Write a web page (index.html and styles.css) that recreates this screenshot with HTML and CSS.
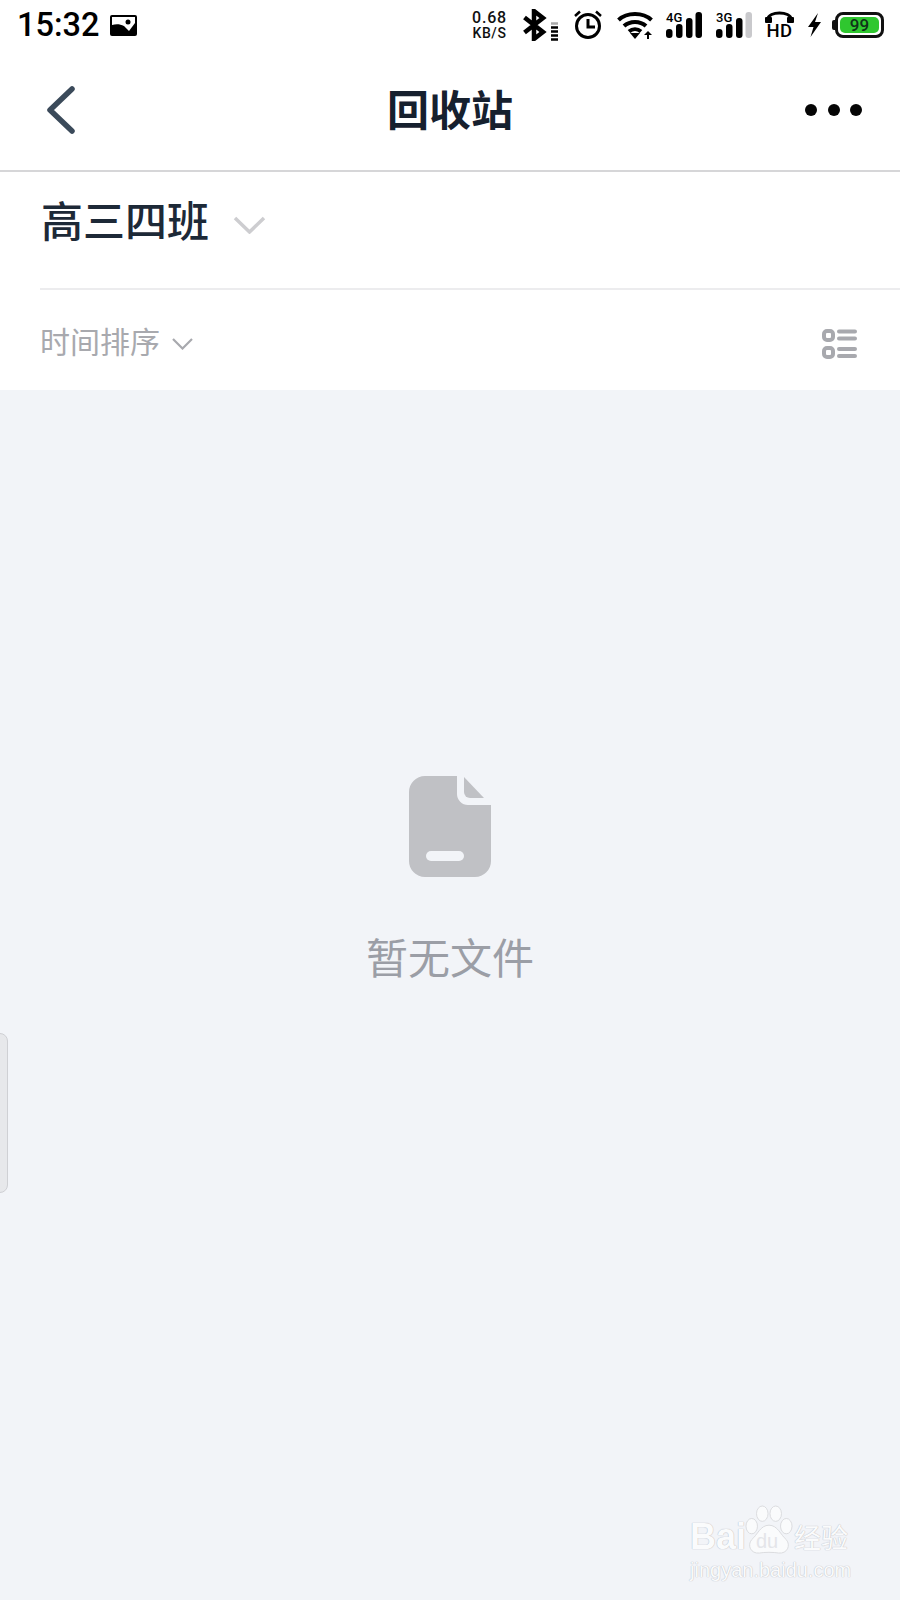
FILE: index.html
```html
<!DOCTYPE html>
<html lang="zh-CN">
<head>
    <meta charset="UTF-8">
    <meta name="viewport" content="width=device-width, initial-scale=1.0">
    <title>回收站</title>
    <link rel="stylesheet" href="styles.css">
</head>
<body>
    <div class="page">
        <div class="status-bar">
            <div class="status-left">
                <span class="clock">15:32</span>
                <svg class="status-pic" width="27" height="21" viewBox="0 0 27 21">
                    <rect width="27" height="21" rx="2" fill="#000"/>
                    <path d="M2 2H25V8L19 16L14 11C10 9 6 9 2 10Z" fill="#fff"/>
                    <circle cx="18" cy="7" r="2.5" fill="#000"/>
                </svg>
            </div>
            <div class="status-right">
                <div class="speed"><span class="speed-num">0.68</span><span class="speed-unit">KB/S</span></div>
                <svg width="36" height="32" viewBox="0 0 36 32">
                    <path d="M1.5 8.5L20 23L11 30V2L20 9L1.5 23.5" fill="none" stroke="#000" stroke-width="4.5"/>
                    <path d="M28 14.5H35" stroke="#aaa" stroke-width="2.5"/>
                    <path d="M28 18.5H35M28 22.5H35M28 26.5H35M28 30.5H35" stroke="#000" stroke-width="2.5"/>
                </svg>
                <svg class="status-wide" width="30" height="30" viewBox="0 0 30 30">
                    <circle cx="15" cy="16" r="11.5" fill="none" stroke="#000" stroke-width="3"/>
                    <path d="M15 9V17H22" fill="none" stroke="#000" stroke-width="3"/>
                    <path d="M2 6L7 1.5M28 6L23 1.5" stroke="#000" stroke-width="2.5"/>
                </svg>
                <svg class="status-wide" width="36" height="28" viewBox="0 0 36 28">
                    <path d="M1.5 9C10 1 26 1 34.5 9M7 15C13 9.5 23 9.5 29 15M12 20.5C15.5 17.5 20.5 17.5 24 20.5" fill="none" stroke="#000" stroke-width="4"/>
                    <path d="M13 22H23L18 28Z" fill="#000"/>
                    <path d="M31 28V23" stroke="#000" stroke-width="2"/>
                    <path d="M27 24L31 20L35 24Z" fill="#000"/>
                </svg>
                <div class="net">
                    <span class="net-label">4G</span>
                    <svg width="36" height="26" viewBox="0 0 36 26">
                        <rect x="0" y="17" width="6.5" height="9" rx="3"/>
                        <rect x="10" y="12" width="6.5" height="14" rx="3"/>
                        <rect x="20" y="6" width="6.5" height="20" rx="3"/>
                        <rect x="29.5" y="0" width="6.5" height="26" rx="3"/>
                    </svg>
                </div>
                <div class="net status-wide">
                    <span class="net-label">3G</span>
                    <svg width="36" height="26" viewBox="0 0 36 26">
                        <rect x="0" y="17" width="6.5" height="9" rx="3"/>
                        <rect x="10" y="12" width="6.5" height="14" rx="3"/>
                        <rect x="20" y="6" width="6.5" height="20" rx="3"/>
                        <rect x="29.5" y="0" width="6.5" height="26" rx="3" fill="#c9c9cc"/>
                    </svg>
                </div>
                <div class="hd">
                    <svg width="29" height="12" viewBox="0 0 29 12">
                        <path d="M3 11V8C3 0 26 0 26 8V11" fill="none" stroke="#000" stroke-width="3"/>
                        <rect x="0" y="6" width="7" height="6" rx="1"/>
                        <rect x="22" y="6" width="7" height="6" rx="1"/>
                    </svg>
                    <span class="hd-text">HD</span>
                </div>
                <svg width="15" height="24" viewBox="0 0 15 24">
                    <path d="M11 0L1 14H6.5L3.5 24L14 9H8Z" fill="#000"/>
                </svg>
                <div class="battery"><span class="battery-level">99</span></div>
            </div>
        </div>

        <header class="top-bar">
            <svg class="back-icon" width="34" height="52" viewBox="0 0 34 52">
                <path d="M29 5L7 26L29 47" fill="none" stroke="#3b4a5a" stroke-width="5.5" stroke-linecap="round" stroke-linejoin="round"/>
            </svg>
            <h1 class="page-title">回收站</h1>
            <div class="more">
                <span class="more-dot"></span>
                <span class="more-dot"></span>
                <span class="more-dot"></span>
            </div>
        </header>

        <div class="class-row">
            <div class="class-row-inner">
                <span class="class-name">高三四班</span>
                <svg class="class-arrow" width="33" height="18" viewBox="0 0 33 18">
                    <path d="M2 2L16.5 16L31 2" fill="none" stroke="#cdcdd0" stroke-width="3.5"/>
                </svg>
            </div>
        </div>

        <div class="sort-row">
            <div class="sort-left">
                <span class="sort-label">时间排序</span>
                <svg class="sort-arrow" width="21" height="12" viewBox="0 0 21 12">
                    <path d="M1 1L10.5 10.5L20 1" fill="none" stroke="#a8a9ae" stroke-width="2.2"/>
                </svg>
            </div>
            <svg class="view-icon" width="35" height="30" viewBox="0 0 35 30">
                <rect x="2" y="2" width="9" height="9" rx="3" fill="none" stroke="#a8a9ae" stroke-width="4"/>
                <rect x="2" y="19" width="9" height="9" rx="3" fill="none" stroke="#a8a9ae" stroke-width="4"/>
                <path d="M17 2.5H33M17 9.5H33M17 20H33M17 27H33" stroke="#a8a9ae" stroke-width="4" stroke-linecap="round"/>
            </svg>
        </div>

        <main class="content">
            <svg width="82" height="101" viewBox="0 0 82 101">
                <path d="M16 0H48V18A11 11 0 0 0 59 29H82V85A16 16 0 0 1 66 101H16A16 16 0 0 1 0 85V16A16 16 0 0 1 16 0Z" fill="#c0c1c5"/>
                <path d="M55 1L75 22H61A6 6 0 0 1 55 16Z" fill="#c0c1c5"/>
                <rect x="17" y="75" width="38" height="10" rx="5" fill="#f2f4f8"/>
            </svg>
            <p class="empty-text">暂无文件</p>
        </main>
    </div>

    <div class="side-handle"></div>

    <div class="watermark">
        <div class="wm-top">
            <span class="wm-bai">Bai</span>
            <div class="wm-paw">
                <svg width="48" height="50" viewBox="0 0 50 52">
                    <ellipse cx="7" cy="22" rx="6" ry="8" fill="#fafbfc" stroke="#d9dade"/>
                    <ellipse cx="18" cy="9" rx="6" ry="8" fill="#fafbfc" stroke="#d9dade"/>
                    <ellipse cx="32" cy="9" rx="6" ry="8" fill="#fafbfc" stroke="#d9dade"/>
                    <ellipse cx="43" cy="22" rx="6" ry="8" fill="#fafbfc" stroke="#d9dade"/>
                    <path d="M25 21C34 21 37 31 43 36C48 42 44 51 35 50C30 49 20 49 15 50C6 51 2 42 7 36C13 31 16 21 25 21Z" fill="#fafbfc" stroke="#d9dade"/>
                </svg>
                <span class="wm-du">du</span>
            </div>
            <span class="wm-cn">经验</span>
        </div>
        <div class="wm-url">jingyan.baidu.com</div>
    </div>
</body>
</html>
```

FILE: styles.css
```css
body {
    margin: 0;
    font-family: "Noto Sans CJK SC", "Noto Sans", sans-serif;
    background-color: #f2f4f8;
}
p, h1 {
    margin: 0;
}
.page {
    display: flex;
    flex-direction: column;
    height: 1600px;
    overflow: hidden;
}

/* status bar */
.status-bar {
    display: flex;
    justify-content: space-between;
    align-items: center;
    height: 50px;
    padding: 0 16px 0 17px;
    background: white;
}
.status-left {
    display: flex;
    align-items: center;
    gap: 11px;
}
.clock {
    font-family: Roboto, sans-serif;
    font-size: 32.5px;
    font-weight: 500;
    line-height: 50px;
    color: #000;
}
.status-right {
    display: flex;
    align-items: center;
    gap: 13px;
}
.status-wide {
    margin-left: 1px;
}
.speed {
    display: flex;
    flex-direction: column;
    align-items: center;
    width: 35px;
    margin-right: 3px;
    font-family: Roboto, sans-serif;
    font-weight: 500;
    color: #111;
}
.speed-num {
    font-size: 16px;
    line-height: 16px;
    letter-spacing: 0.8px;
}
.speed-unit {
    font-size: 14px;
    line-height: 14px;
    letter-spacing: 0.6px;
}
.net {
    position: relative;
    width: 36px;
    height: 26px;
}
.net svg {
    display: block;
}
.net-label {
    position: absolute;
    left: 0;
    top: -1px;
    font-family: Roboto, sans-serif;
    font-size: 13px;
    font-weight: 500;
    line-height: 13px;
    color: #000;
}
.hd {
    display: flex;
    flex-direction: column;
    align-items: center;
    width: 29px;
}
.hd svg {
    display: block;
}
.hd-text {
    margin-top: 1px;
    font-family: Roboto, sans-serif;
    font-size: 18.5px;
    font-weight: 500;
    line-height: 15px;
    letter-spacing: 0.5px;
    color: #000;
}
.battery {
    position: relative;
    box-sizing: border-box;
    width: 49px;
    height: 26px;
    padding: 2px;
    border: 3px solid #111;
    border-radius: 8px;
}
.battery::before {
    content: "";
    position: absolute;
    left: -6px;
    top: 5px;
    width: 3px;
    height: 10px;
    border-radius: 2px 0 0 2px;
    background-color: #111;
}
.battery-level {
    display: block;
    height: 100%;
    border-radius: 5px;
    background-color: #2fc72f;
    font-family: Roboto, sans-serif;
    font-size: 17px;
    font-weight: 500;
    line-height: 16px;
    text-align: center;
    color: #10301a;
}

/* title bar */
.top-bar {
    display: grid;
    grid-template-columns: 1fr auto 1fr;
    align-items: center;
    height: 120px;
    padding: 0 38px;
    border-bottom: 2px solid #d6d6d8;
    background: white;
}
.back-icon {
    margin-left: 5px;
}
.page-title {
    padding-bottom: 4px;
    font-size: 42px;
    font-weight: 700;
    line-height: 60px;
    color: #16202e;
}
.more {
    display: flex;
    justify-content: flex-end;
    gap: 10.5px;
}
.more-dot {
    width: 12px;
    height: 12px;
    border-radius: 50%;
    background-color: #050505;
}

/* class selector */
.class-row {
    padding-left: 40px;
    background: white;
}
.class-row-inner {
    display: flex;
    align-items: center;
    gap: 24px;
    box-sizing: border-box;
    height: 118px;
    padding: 0 0 23px 1px;
    border-bottom: 2px solid #ececee;
}
.class-name {
    font-size: 42px;
    font-weight: 500;
    color: #1d2937;
}
.class-arrow {
    margin-top: 12px;
}

/* sort row */
.sort-row {
    display: flex;
    justify-content: space-between;
    align-items: center;
    box-sizing: border-box;
    height: 100px;
    padding: 0 43px 1px 40px;
    background: white;
}
.sort-left {
    display: flex;
    align-items: center;
    gap: 12px;
}
.sort-label {
    font-size: 30px;
    color: #a8a9ae;
}
.sort-arrow, .view-icon {
    margin-top: 8px;
}

/* empty state */
.content {
    display: flex;
    flex-direction: column;
    align-items: center;
    flex: 1;
    padding-top: 386px;
}
.empty-text {
    margin-top: 48px;
    font-size: 42px;
    line-height: 62px;
    color: #9b9ea6;
}

/* floating things */
.side-handle {
    position: absolute;
    left: -8px;
    top: 1033px;
    width: 14px;
    height: 158px;
    border: 1px solid #cfd0d4;
    border-radius: 8px;
    background-color: #e7e8eb;
}
.watermark {
    position: absolute;
    left: 690px;
    top: 1503px;
    width: 170px;
    color: #fafbfc;
    text-shadow: 0 0 1px #b9bac0, 0 0 1px #c9cad0;
}
.wm-top {
    display: flex;
    align-items: flex-end;
    height: 52px;
}
.wm-bai {
    width: 55px;
    font-family: "Liberation Sans", sans-serif;
    font-size: 36px;
    font-weight: 700;
    line-height: 36px;
}
.wm-paw {
    position: relative;
    width: 48px;
    height: 50px;
    flex-shrink: 0;
}
.wm-du {
    position: absolute;
    left: 11px;
    top: 25px;
    font-family: "Liberation Sans", sans-serif;
    font-size: 20px;
    line-height: 22px;
    color: #e4e5e9;
    text-shadow: none;
}
.wm-cn {
    margin-left: 1px;
    font-size: 27px;
    line-height: 36px;
}
.wm-url {
    margin-top: 4px;
    font-family: "Liberation Sans", sans-serif;
    font-size: 20px;
    line-height: 22px;
    white-space: nowrap;
}
```
